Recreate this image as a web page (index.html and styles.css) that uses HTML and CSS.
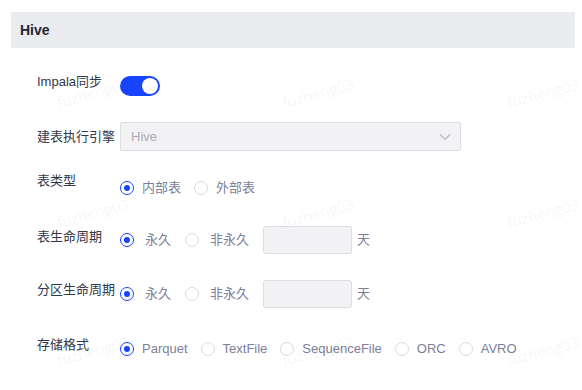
FILE: index.html
```html
<!DOCTYPE html>
<html lang="zh-CN">
<head>
    <meta charset="UTF-8">
    <meta name="viewport" content="width=device-width, initial-scale=1.0">
    <title>Hive 配置</title>
    <link rel="stylesheet" href="styles.css">
</head>
<body>
    <div class="panel">
        <div class="section-title">Hive</div>

        <div class="form">
            <div class="form-row row-switch">
                <label class="form-label">Impala同步</label>
                <div class="control">
                    <span class="switch on"><span class="knob"></span></span>
                </div>
            </div>

            <div class="form-row row-select">
                <label class="form-label label-tall">建表执行引擎</label>
                <div class="control">
                    <div class="select disabled">
                        <span class="select-value">Hive</span>
                        <svg class="chevron" width="12" height="8" viewBox="0 0 12 8">
                            <path d="M1 1.5 L6 6.5 L11 1.5" fill="none" stroke="#b4b7c2" stroke-width="1.1"/>
                        </svg>
                    </div>
                </div>
            </div>

            <div class="form-row row-type">
                <label class="form-label">表类型</label>
                <div class="control radios offset-7">
                    <span class="radio checked"><i></i>内部表</span>
                    <span class="radio"><i></i>外部表</span>
                </div>
            </div>

            <div class="form-row row-life">
                <label class="form-label offset-1">表生命周期</label>
                <div class="control radios wide">
                    <span class="radio checked"><i></i>永久</span>
                    <span class="radio"><i></i>非永久</span>
                    <span class="days-input"></span>
                    <span class="unit">天</span>
                </div>
            </div>

            <div class="form-row row-life">
                <label class="form-label">分区生命周期</label>
                <div class="control radios wide">
                    <span class="radio checked"><i></i>永久</span>
                    <span class="radio"><i></i>非永久</span>
                    <span class="days-input"></span>
                    <span class="unit">天</span>
                </div>
            </div>

            <div class="form-row">
                <label class="form-label">存储格式</label>
                <div class="control radios offset-4">
                    <span class="radio checked"><i></i>Parquet</span>
                    <span class="radio"><i></i>TextFile</span>
                    <span class="radio"><i></i>SequenceFile</span>
                    <span class="radio"><i></i>ORC</span>
                    <span class="radio"><i></i>AVRO</span>
                </div>
            </div>
        </div>
    </div>

    <div class="watermarks">
        <span>fuzheng03</span><span>fuzheng03</span><span>fuzheng03</span>
        <span>fuzheng03</span><span>fuzheng03</span><span>fuzheng03</span>
        <span>fuzheng03</span><span>fuzheng03</span><span>fuzheng03</span>
    </div>
</body>
</html>
```

FILE: styles.css
```css
body {
    margin: 0;
    font-family: "Liberation Sans", "Noto Sans CJK SC", sans-serif;
    font-size: 13px;
    background: #fff;
    color: #333848;
}
.panel {
    padding: 12px 7px 0 11px;
}
.section-title {
    height: 36px;
    line-height: 36px;
    background-color: #ebecf0;
    padding-left: 9px;
    font-size: 14px;
    font-weight: bold;
    color: #222530;
}
.form {
    padding: 24px 0 0 26px;
}
.form-row {
    display: flex;
    align-items: flex-start;
}
.row-switch { height: 50px; }
.row-select { height: 49px; }
.row-type { height: 55px; }
.row-life { height: 54px; }
.row-life + .row-life { height: 55px; }
.form-label {
    width: 83px;
    line-height: 20px;
    color: #333848;
    white-space: nowrap;
}
.label-tall { line-height: 29px; }
.offset-1 { padding-top: 1px; }
.offset-4 { margin-top: 4px; }
.offset-7 { margin-top: 7px; }
.control { display: flex; align-items: center; }

.switch {
    display: inline-block;
    position: relative;
    width: 40px;
    height: 20px;
    margin-top: 4px;
    border-radius: 10px;
    background-color: #1745ff;
}
.switch .knob {
    position: absolute;
    top: 2px;
    right: 2px;
    width: 16px;
    height: 16px;
    border-radius: 50%;
    background: #fff;
}

.select {
    width: 320px;
    height: 27px;
    border: 1px solid #dcdde2;
    border-radius: 2px;
    background-color: #f2f2f5;
    display: flex;
    align-items: center;
    justify-content: space-between;
    padding: 0 9px 0 10px;
}
.select-value { color: #a9acb8; }

.radios { line-height: 20px; }
.radio {
    display: inline-flex;
    align-items: center;
    color: #7c8099;
    margin-right: 13px;
}
.radio i {
    display: inline-block;
    box-sizing: border-box;
    width: 14px;
    height: 14px;
    border: 1px solid #d9dbe0;
    border-radius: 50%;
    margin-right: 8px;
    position: relative;
}
.radio.checked i { border-color: #1745ff; }
.radio.checked i::after {
    content: "";
    position: absolute;
    top: 3px;
    left: 3px;
    width: 6px;
    height: 6px;
    border-radius: 50%;
    background: #1745ff;
}
.wide .radio i { margin-right: 11px; }
.wide .radio { margin-right: 14px; }
.days-input {
    display: inline-block;
    width: 87px;
    height: 26px;
    border: 1px solid #dcdde2;
    border-radius: 3px;
    background: #f2f2f5;
}
.unit {
    margin-left: 5px;
    color: #7c8099;
}

.watermarks {
    position: absolute;
    top: 0;
    left: 0;
    width: 582px;
    height: 390px;
    pointer-events: none;
    display: grid;
    grid-template-columns: repeat(3, 225px);
    grid-template-rows: 120px 138px 40px;
    padding: 92px 0 0 60px;
    box-sizing: border-box;
    overflow: hidden;
}
.watermarks span {
    font-family: "Open Sans", sans-serif;
    font-size: 15px;
    color: rgba(0, 0, 0, 0.06);
    transform: rotate(-15deg);
    transform-origin: left bottom;
    height: 20px;
    white-space: nowrap;
}
```
